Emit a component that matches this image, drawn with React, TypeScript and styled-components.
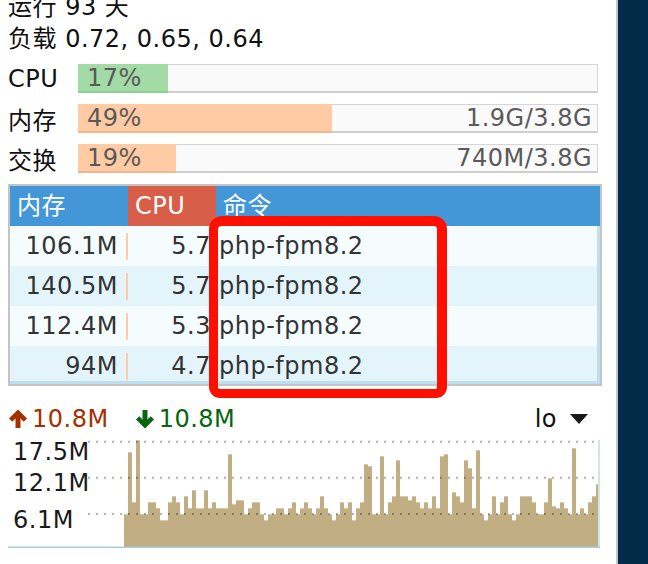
import styled, { createGlobalStyle } from "styled-components";

const GlobalStyle = createGlobalStyle`
    html, body {
        margin: 0;
        padding: 0;
        background: #ffffff;
    }
    body {
        font-family: "DejaVu Sans", "Noto Sans CJK SC", sans-serif;
        letter-spacing: 0.5px;
        color: #111;
    }
`;

const Screen = styled.div`
    position: relative;
    display: flex;
    width: 648px;
    height: 564px;
    overflow: hidden;
`;

const Panel = styled.div`
    box-sizing: border-box;
    width: 618px;
    flex: none;
    padding: 0 14px 0 8px;
    border-right: 2px solid #c6c6c6;
    background: #ffffff;
    display: flex;
    flex-direction: column;
`;

const Side = styled.div`
    flex: 1;
    background: #022a49;
`;

const InfoLine = styled.div`
    font-size: 24px;
    line-height: 32px;
    white-space: nowrap;
    color: #111;
    &:first-child {
        margin-top: -9px;
    }
`;

const BarRow = styled.div<{ $first?: boolean }>`
    display: flex;
    align-items: center;
    height: 29px;
    margin-top: ${(p) => (p.$first ? "9px" : "11px")};
    margin-right: 4px;
`;

const BarLabel = styled.div`
    width: 70px;
    font-size: 24px;
    color: #111;
`;

const Track = styled.div`
    position: relative;
    flex: 1;
    height: 29px;
    background: #fafafa;
    box-shadow: inset 0 1px #d6d6d6, inset 1px 0 #d6d6d6, inset -1px 0 #d6d6d6,
        inset 0 -2px #cfcfcf;
`;

const Fill = styled.div<{ $tone: "green" | "orange" }>`
    position: absolute;
    left: 0;
    top: 0;
    bottom: 0;
    box-sizing: border-box;
    background: ${(p) => (p.$tone === "green" ? "#a2dba6" : "#ffcba4")};
    border-bottom: 2px solid ${(p) => (p.$tone === "green" ? "#8ccf92" : "#f2b68c")};
`;

const BarText = styled.div`
    position: relative;
    display: flex;
    justify-content: space-between;
    height: 100%;
    padding: 0 6px 0 9px;
    font-size: 24px;
    line-height: 29px;
    color: #5a5a5a;
`;

const TableBox = styled.div`
    margin-top: 11px;
    border: 2px solid #c4c4c4;
`;

const cols = "118px 88px 1fr";

const HeadRow = styled.div`
    display: grid;
    grid-template-columns: ${cols};
    height: 40px;
    background: #4397d7;
`;

const HeadCell = styled.div<{ $active?: boolean }>`
    padding-left: 7px;
    font-size: 24px;
    line-height: 40px;
    color: #ffffff;
    background: ${(p) => (p.$active ? "#d75f4a" : "transparent")};
`;

const Body = styled.div`
    height: 155px;
    overflow: hidden;
    border-right: 3px solid #bddff0;
    border-bottom: 3px solid #bddff0;
`;

const Row = styled.div<{ $odd: boolean }>`
    display: grid;
    grid-template-columns: ${cols};
    height: 40px;
    font-size: 24px;
    line-height: 40px;
    color: #333;
    background: ${(p) => (p.$odd ? "#e3f5fb" : "#f4fcfe")};
`;

const MemCell = styled.div`
    display: flex;
    align-items: center;
    justify-content: flex-end;
`;

const Mark = styled.span`
    width: 2px;
    height: 27px;
    margin-left: 8px;
    background: #ffcba4;
`;

const CpuCell = styled.div`
    text-align: right;
    padding-right: 5px;
`;

const CmdCell = styled.div`
    padding-left: 3px;
    white-space: nowrap;
`;

const Highlight = styled.div`
    position: absolute;
    left: 209px;
    top: 216px;
    width: 238px;
    height: 182px;
    box-sizing: border-box;
    border: 9px solid #fe0f00;
    border-top-width: 10px;
    border-right-width: 10px;
    border-radius: 13px 13px 11px 11px;
    pointer-events: none;
`;

const NetRow = styled.div`
    display: flex;
    align-items: center;
    justify-content: space-between;
    height: 32px;
    margin-top: 17px;
    margin-right: 14px;
    font-size: 24px;
`;

const Rates = styled.div`
    display: flex;
    align-items: center;
`;

const Rate = styled.span<{ $dir: "up" | "down" }>`
    display: flex;
    align-items: center;
    gap: 4px;
    color: ${(p) => (p.$dir === "up" ? "#a33100" : "#07660e")};
    & + & {
        margin-left: 26px;
    }
`;

const Picker = styled.div`
    display: flex;
    align-items: center;
    gap: 13px;
    color: #111;
`;

const Chart = styled.div`
    position: relative;
    height: 111px;
    margin-top: 2px;
    margin-right: 2px;
`;

const Axis = styled.span<{ $top: number }>`
    position: absolute;
    left: 5px;
    top: ${(p) => p.$top}px;
    font-size: 24px;
    line-height: 24px;
    color: #1a1a1a;
`;

// bar tops as measured on the traffic graph (3x scale), baseline at 470
const tops = [
    372, 186, 336, 150, 372, 372, 336, 336, 354, 390, 390, 336, 318, 336, 372, 318, 354, 300, 354, 354,
    300, 354, 336, 354, 354, 354, 192, 342, 330, 330, 372, 354, 336, 336, 372, 390, 372, 372, 354, 354,
    372, 354, 336, 372, 354, 336, 354, 372, 354, 318, 354, 372, 390, 372, 336, 354, 336, 390, 354, 336,
    222, 228, 372, 372, 198, 372, 336, 318, 210, 318, 318, 330, 318, 336, 354, 336, 354, 318, 354, 198,
    192, 372, 306, 318, 336, 210, 234, 354, 180, 372, 390, 372, 318, 372, 336, 318, 372, 390, 372, 318,
    318, 318, 336, 372, 372, 336, 264, 348, 354, 336, 354, 372, 174, 372, 354, 372, 336, 318, 282,
];
const samples = tops.map((t) => (470 - t) / 3);

const bars = [
    { label: "CPU", pct: 17.3, tone: "green" as const, text: "17%", total: "" },
    { label: "内存", pct: 48.8, tone: "orange" as const, text: "49%", total: "1.9G/3.8G" },
    { label: "交换", pct: 18.8, tone: "orange" as const, text: "19%", total: "740M/3.8G" },
];

const procs = [
    { mem: "106.1M", cpu: "5.7", cmd: "php-fpm8.2" },
    { mem: "140.5M", cpu: "5.7", cmd: "php-fpm8.2" },
    { mem: "112.4M", cpu: "5.3", cmd: "php-fpm8.2" },
    { mem: "94M", cpu: "4.7", cmd: "php-fpm8.2" },
];

const Arrow = ({ dir }: { dir: "up" | "down" }) => (
    <svg width="20" height="20" viewBox="0 0 20 20" style={{ transform: dir === "down" ? "rotate(180deg)" : undefined }}>
        <path d="M10 19V5" stroke="currentColor" strokeWidth="5" fill="none" />
        <path d="M2.6 11.2 10 3.8l7.4 7.4" stroke="currentColor" strokeWidth="4.6" fill="none" />
    </svg>
);

const TrafficGraph = () => {
    const base = 110;
    const grid = [4.7, 40.7, 77];
    return (
        <svg width="592" height="111" viewBox="0 0 592 111" style={{ display: "block" }}>
            <g transform="translate(116 0)">
                {samples.map((h, i) => (
                    <rect key={i} x={i * 4} y={base - h} width={4} height={h} fill="#c1ae82" />
                ))}
            </g>
            {grid.map((y) => (
                <line key={y} x1="80" x2="592" y1={y} y2={y} stroke="rgba(0,0,0,0.3)" strokeWidth="2" strokeDasharray="2 6" />
            ))}
            <line x1="591" x2="591" y1="3" y2={base} stroke="#cfe5ed" strokeWidth="2" />
            <line x1="0" x2="592" y1={base + 0.5} y2={base + 0.5} stroke="#a9cdd6" strokeWidth="2" />
        </svg>
    );
};

export default function App() {
    return (
        <>
            <GlobalStyle />
            <Screen>
                <Panel>
                    <InfoLine>运行 93 天</InfoLine>
                    <InfoLine>负载 0.72, 0.65, 0.64</InfoLine>
                    {bars.map((b, i) => (
                        <BarRow key={b.label} $first={i === 0}>
                            <BarLabel>{b.label}</BarLabel>
                            <Track>
                                <Fill $tone={b.tone} style={{ width: `${b.pct}%` }} />
                                <BarText>
                                    <span>{b.text}</span>
                                    <span>{b.total}</span>
                                </BarText>
                            </Track>
                        </BarRow>
                    ))}
                    <TableBox>
                        <HeadRow>
                            <HeadCell>内存</HeadCell>
                            <HeadCell $active>CPU</HeadCell>
                            <HeadCell>命令</HeadCell>
                        </HeadRow>
                        <Body>
                            {procs.map((p, i) => (
                                <Row key={i} $odd={i % 2 === 1}>
                                    <MemCell>
                                        {p.mem}
                                        <Mark />
                                    </MemCell>
                                    <CpuCell>{p.cpu}</CpuCell>
                                    <CmdCell>{p.cmd}</CmdCell>
                                </Row>
                            ))}
                        </Body>
                    </TableBox>
                    <NetRow>
                        <Rates>
                            <Rate $dir="up">
                                <Arrow dir="up" />
                                10.8M
                            </Rate>
                            <Rate $dir="down">
                                <Arrow dir="down" />
                                10.8M
                            </Rate>
                        </Rates>
                        <Picker>
                            lo
                            <svg width="18" height="10" viewBox="0 0 18 10">
                                <polygon points="0,0 18,0 9,10" fill="#1a1a1a" />
                            </svg>
                        </Picker>
                    </NetRow>
                    <Chart>
                        <TrafficGraph />
                        <Axis $top={3}>17.5M</Axis>
                        <Axis $top={34}>12.1M</Axis>
                        <Axis $top={71}>6.1M</Axis>
                    </Chart>
                </Panel>
                <Side />
                <Highlight />
            </Screen>
        </>
    );
}
